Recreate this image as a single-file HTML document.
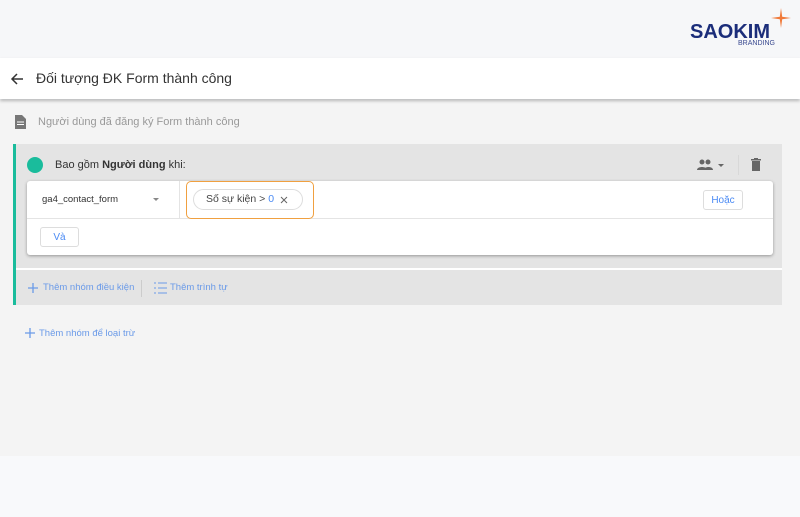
<!DOCTYPE html>
<html><head><meta charset="utf-8"><style>
*{margin:0;padding:0;box-sizing:border-box}
body{width:800px;height:517px;background:#f8f9fb;font-family:"Liberation Sans",sans-serif;position:relative;overflow:hidden}
.a{position:absolute}
</style></head><body>
<div class="a" style="left:0;top:0;width:800px;height:58px;background:#f6f7f9"></div>
<div class="a" style="left:690px;top:21px;font:bold 20px 'Liberation Sans',sans-serif;color:#1b2d7a;letter-spacing:0px">SAOKIM</div>
<div class="a" style="left:738px;top:40px;font-size:7px;color:#3a4a90">BRANDING</div>
<svg class="a" style="left:771px;top:8px" width="20" height="20" viewBox="0 0 20 20"><path d="M10 0 L11.2 8.8 L20 10 L11.2 11.2 L10 20 L8.8 11.2 L0 10 L8.8 8.8Z" fill="#f07a3a"/></svg>
<div class="a" style="left:0;top:100px;width:800px;height:356px;background:#f4f4f4"></div>
<div class="a" style="left:0;top:58px;width:800px;height:41px;background:#fff;box-shadow:0 2px 3px rgba(0,0,0,.25)"></div>
<svg class="a" style="left:10px;top:72px" width="14" height="14" viewBox="0 0 14 14"><path d="M13 7H2M7 2L2 7l5 5" stroke="#333" stroke-width="1.5" fill="none"/></svg>
<div class="a" style="left:36px;top:70px;font-size:14px;color:#333">Đối tượng ĐK Form thành công</div>
<svg class="a" style="left:15px;top:115px" width="11" height="14" viewBox="0 0 11 14"><path d="M0 0h7l4 4v10H0z" fill="#777"/><path d="M2 7h7M2 9.5h7" stroke="#fff" stroke-width="1"/></svg>
<div class="a" style="left:38px;top:116px;font-size:11px;color:#999">Người dùng đã đăng ký Form thành công</div>
<div class="a" style="left:13px;top:144px;width:769px;height:161px;background:#e4e4e4;border-left:3px solid #1abc9c"></div>
<div class="a" style="left:27px;top:157px;width:16px;height:16px;border-radius:50%;background:#1abc9c"></div>
<div class="a" style="left:55px;top:159px;font-size:11px;color:#333">Bao gồm <b>Người dùng</b> khi:</div>
<svg class="a" style="left:697px;top:159px" width="30" height="12" viewBox="0 0 30 12"><circle cx="5" cy="3" r="2.5" fill="#666"/><circle cx="11" cy="3" r="2.5" fill="#666"/><path d="M0 11c0-4 10-4 10 0zM7 11c0-4 9-4 9 0z" fill="#666"/><path d="M21 5h6l-3 3z" fill="#666"/></svg>
<div class="a" style="left:738px;top:155px;width:1px;height:20px;background:#d8d8d8"></div>
<svg class="a" style="left:751px;top:158px" width="10" height="13" viewBox="0 0 10 13"><path d="M0 1h10v1.5H0zM3 0h4v1H3zM1 3h8v10H1z" fill="#666"/></svg>
<div class="a" style="left:27px;top:181px;width:746px;height:74px;background:#fff;border-radius:3px;box-shadow:0 1px 3px rgba(0,0,0,.35)"></div>
<div class="a" style="left:27px;top:218px;width:746px;height:1px;background:#e4e4e4"></div>
<div class="a" style="left:179px;top:181px;width:1px;height:37px;background:#e4e4e4"></div>
<div class="a" style="left:42px;top:194px;font-size:9.5px;color:#333">ga4_contact_form</div>
<svg class="a" style="left:153px;top:198px" width="6" height="4"><path d="M0 0h6L3 3z" fill="#888"/></svg>
<div class="a" style="left:186px;top:181px;width:128px;height:38px;border:1px solid #f0a040;border-radius:5px"></div>
<div class="a" style="left:193px;top:189px;width:110px;height:21px;border:1px solid #ddd;border-radius:11px"></div>
<div class="a" style="left:206px;top:193px;font-size:10.5px;color:#444">Số sự kiện &gt; <span style="color:#4a8af4">0</span></div>
<svg class="a" style="left:280px;top:196px" width="8" height="8"><path d="M1 1l6 6M7 1L1 7" stroke="#666" stroke-width="1"/></svg>
<div class="a" style="left:703px;top:190px;width:40px;height:20px;border:1px solid #ddd;border-radius:3px;font-size:10px;color:#4a8af4;text-align:center;line-height:20px">Hoặc</div>
<div class="a" style="left:40px;top:227px;width:39px;height:20px;border:1px solid #ddd;border-radius:3px;font-size:10px;color:#4a8af4;text-align:center;line-height:20px">Và</div>
<div class="a" style="left:16px;top:268px;width:766px;height:2px;background:#fff"></div>
<svg class="a" style="left:28px;top:283px" width="10" height="10"><path d="M5 0v10M0 5h10" stroke="#6a9ae8" stroke-width="1.3"/></svg>
<div class="a" style="left:43px;top:282px;font-size:9.5px;color:#6a9ae8">Thêm nhóm điều kiện</div>
<div class="a" style="left:141px;top:280px;width:1px;height:17px;background:#ccc"></div>
<svg class="a" style="left:154px;top:282px" width="13" height="12"><path d="M4 1h9M4 6h9M4 11h9" stroke="#6a9ae8" stroke-width="1"/><path d="M0 1h2M0 6h2M0 11h2" stroke="#6a9ae8" stroke-width="1"/></svg>
<div class="a" style="left:170px;top:282px;font-size:9.5px;color:#6a9ae8">Thêm trình tự</div>
<svg class="a" style="left:25px;top:328px" width="10" height="10"><path d="M5 0v10M0 5h10" stroke="#6a9ae8" stroke-width="1.3"/></svg>
<div class="a" style="left:39px;top:328px;font-size:9.5px;color:#6a9ae8">Thêm nhóm để loại trừ</div>
</body></html>
